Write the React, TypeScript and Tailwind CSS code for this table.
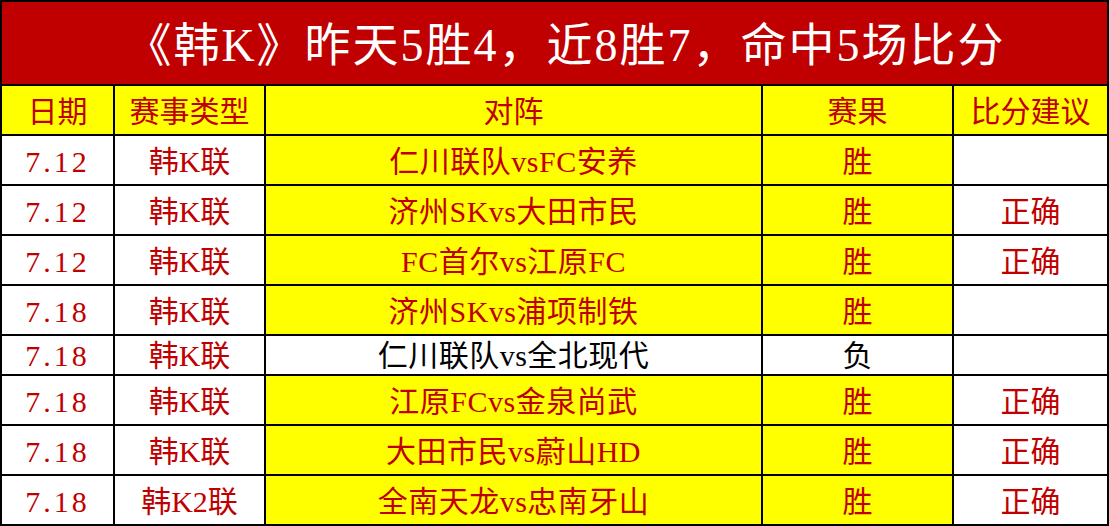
import React from "react";

type Row = {
  date: string;
  type: string;
  match: string;
  result: string;
  advice: string;
  plain?: boolean;
  short?: boolean;
};

const rows: Row[] = [
  { date: "7.12", type: "韩K联", match: "仁川联队vsFC安养", result: "胜", advice: "" },
  { date: "7.12", type: "韩K联", match: "济州SKvs大田市民", result: "胜", advice: "正确" },
  { date: "7.12", type: "韩K联", match: "FC首尔vs江原FC", result: "胜", advice: "正确" },
  { date: "7.18", type: "韩K联", match: "济州SKvs浦项制铁", result: "胜", advice: "" },
  { date: "7.18", type: "韩K联", match: "仁川联队vs全北现代", result: "负", advice: "", plain: true, short: true },
  { date: "7.18", type: "韩K联", match: "江原FCvs金泉尚武", result: "胜", advice: "正确" },
  { date: "7.18", type: "韩K联", match: "大田市民vs蔚山HD", result: "胜", advice: "正确" },
  { date: "7.18", type: "韩K2联", match: "全南天龙vs忠南牙山", result: "胜", advice: "正确" },
];

const font = {
  fontFamily: '"Liberation Serif", "Noto Sans CJK SC", serif',
};

export default function App() {
  return (
    <div className="w-[1109px] h-[526px] bg-white overflow-hidden" style={font}>
      <div className="grid grid-cols-[111px_149px_495px_189px_153px] gap-[2px] p-[2px] bg-black w-[1109px]">
        <div className="col-span-5 h-[82px] bg-[#c00000] flex items-center justify-center text-white text-[46px] leading-none pl-[22px] pt-[5px] tracking-[2px]">
          《韩K》昨天5胜4，近8胜7，命中5场比分
        </div>
        {["日期", "赛事类型", "对阵", "赛果", "比分建议"].map((h) => (
          <div
            key={h}
            className="h-[48px] bg-[#ffff00] flex items-center justify-center text-[#c00000] text-[30px] leading-none pt-[4px]"
          >
            {h}
          </div>
        ))}
        {rows.map((r, i) => {
          const h = r.short ? "h-[38px] pt-[2px]" : "h-[48px] pt-[4px]";
          const yellow = r.plain ? "bg-white text-black" : "bg-[#ffff00] text-[#c00000]";
          return (
            <React.Fragment key={i}>
              <div className={`${h} bg-white flex items-center justify-center text-[#c00000] text-[30px] leading-none tracking-[3px]`}>
                {r.date}
              </div>
              <div className={`${h} bg-white flex items-center justify-center text-[#c00000] text-[30px] leading-none`}>
                {r.type}
              </div>
              <div className={`${h} ${yellow} flex items-center justify-center text-[30px] leading-none tracking-[0.5px]`}>
                {r.match}
              </div>
              <div className={`${h} ${yellow} flex items-center justify-center text-[30px] leading-none`}>
                {r.result}
              </div>
              <div className={`${h} bg-white flex items-center justify-center text-[#c00000] text-[30px] leading-none`}>
                {r.advice}
              </div>
            </React.Fragment>
          );
        })}
      </div>
    </div>
  );
}
